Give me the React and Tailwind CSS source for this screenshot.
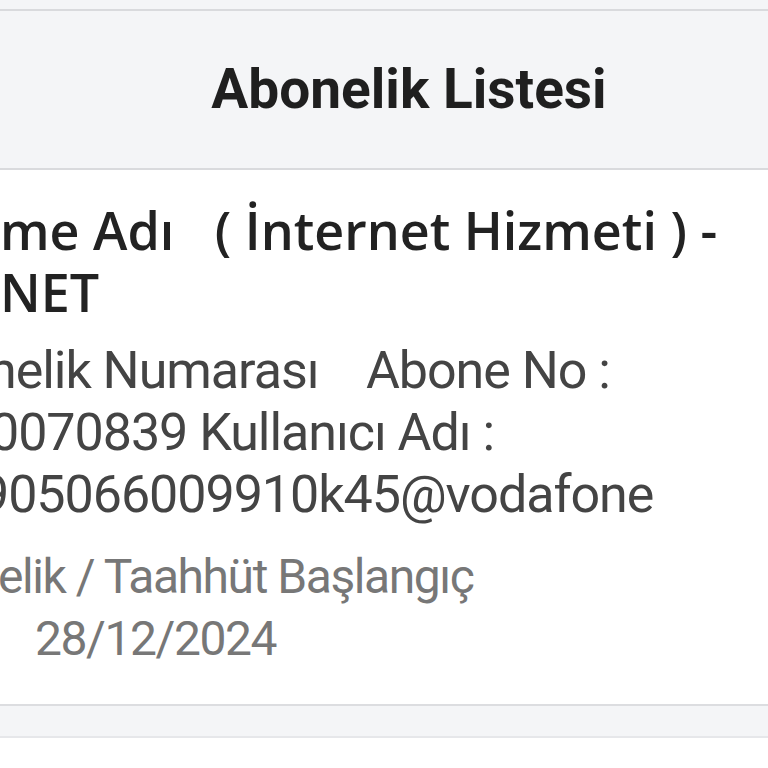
import React from 'react'

// satirlar sol kenardan tasiyor; gizli kisim sifir genislikli kutuda sola tasar
function Row({ hidden, children, className = '' }) {
  return (
    <div className={`flex whitespace-pre ${className}`}>
      <div className="w-0 shrink-0 flex justify-end">
        <span>{hidden}</span>
      </div>
      <span>{children}</span>
    </div>
  )
}

export default function App() {
  return (
    <div className="min-h-screen bg-white overflow-hidden" style={{ fontFamily: 'Roboto, "Noto Sans", sans-serif' }}>
      <div className="h-[9px] bg-[#f4f5f7]" />
      <div className="h-[2px] bg-[#d9dadd]" />
      <div className="h-[157px] bg-[#f4f5f7] flex items-center justify-center pl-[50px]">
        <h1 className="text-[55px] font-bold text-[#1f1f1f] leading-none">Abonelik Listesi</h1>
      </div>
      <div className="h-[2px] bg-[#d9dadd]" />

      <div className="bg-white pt-[29px] pb-[34px]">
        <div
          className="text-[52px] leading-[62px] font-semibold text-[#222222]"
          style={{ fontFamily: '"Open Sans", "Noto Sans", sans-serif' }}
        >
          <Row hidden="Hizmet / Paket İs">me Adı   ( İnternet Hizmeti ) -</Row>
          <Row hidden="VODAFONE ">NET</Row>
        </div>

        <div className="mt-[17px] text-[52px] leading-[62px] tracking-[-0.02em] text-[#444444]">
          <Row hidden="Abo" className="ml-[-12px]">nelik Numarası    Abone No :</Row>
          <Row hidden="1" className="ml-[-10px]">0070839 Kullanıcı Adı :</Row>
          <Row hidden="0" className="ml-[-20px]">905066009910k45@vodafone</Row>
        </div>

        <div className="mt-[20px] text-[48px] leading-[62px] tracking-[-0.03em] text-[#777777]">
          <Row hidden="Abon" className="ml-[-2px]">elik / Taahhüt Başlangıç</Row>
          <Row hidden="Tarihi :">
            <span className="ml-[35px]">28/12/2024</span>
          </Row>
        </div>
      </div>

      <div className="h-[2px] bg-[#dcdde0]" />
      <div className="h-[30px] bg-[#f4f5f7]" />
      <div className="h-[2px] bg-[#e6e7ea]" />
    </div>
  )
}
